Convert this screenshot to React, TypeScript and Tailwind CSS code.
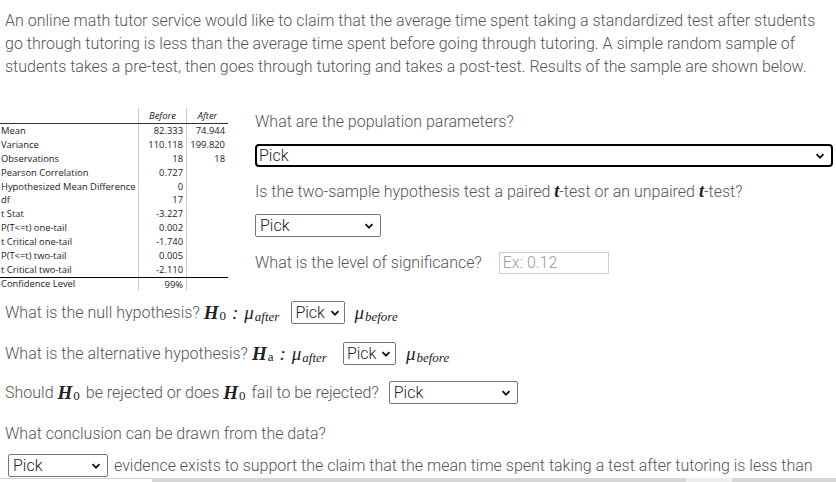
import React from "react";

const rows: [string, string, string][] = [
  ["Mean", "82.333", "74.944"],
  ["Variance", "110.118", "199.820"],
  ["Observations", "18", "18"],
  ["Pearson Correlation", "0.727", ""],
  ["Hypothesized Mean Difference", "0", ""],
  ["df", "17", ""],
  ["t Stat", "-3.227", ""],
  ["P(T<=t) one-tail", "0.002", ""],
  ["t Critical one-tail", "-1.740", ""],
  ["P(T<=t) two-tail", "0.005", ""],
  ["t Critical two-tail", "-2.110", ""],
];

const math = "font-['Liberation_Serif',serif] italic text-[#222]";

function Sel({ className = "" }: { className?: string }) {
  return (
    <div
      className={`flex items-center justify-between border border-[#767676] rounded-[2px] bg-white pl-[4px] pr-[6px] h-[23px] text-[#222] ${className}`}
    >
      <span>Pick</span>
      <svg width="10" height="10" viewBox="0 0 10 10">
        <path d="M1.5 3.2 5 6.7 8.5 3.2" fill="none" stroke="#111" strokeWidth="1.8" />
      </svg>
    </div>
  );
}

function Mu({ sub }: { sub: string }) {
  return (
    <span className={`${math} text-[19px]`}>
      μ<sub className="text-[13px] relative top-[2px] ml-[1px]">{sub}</sub>
    </span>
  );
}

function H({ sub }: { sub: string }) {
  return (
    <span className={`${math} font-bold text-[19px]`}>
      H<sub className="not-italic font-normal text-[13px] relative top-[1px] ml-[1px]">{sub}</sub>
    </span>
  );
}

export default function App() {
  return (
    <div className="w-[836px] h-[482px] overflow-hidden bg-white font-['Roboto',sans-serif] font-light text-[16px] leading-[23px] text-[#555] flex flex-col">
      <p className="px-[5px] pt-[9px]">
        An online math tutor service would like to claim that the average time spent taking a standardized test after students
        go through tutoring is less than the average time spent before going through tutoring. A simple random sample of
        students takes a pre-test, then goes through tutoring and takes a post-test. Results of the sample are shown below.
      </p>

      <div className="flex mt-[30px]">
        <div className="w-[228px] font-['Open_Sans',sans-serif] font-normal text-[9.4px] leading-[14px] text-[#222]">
          <div className="flex h-[15px] items-center">
            <div className="w-[138px]" />
            <div className="w-[48px] border-l border-[#ccc] h-full flex items-center justify-center italic">Before</div>
            <div className="w-[42px] border-l border-[#ccc] h-full flex items-center justify-center italic">After</div>
          </div>
          <div className="border-t border-[#333]">
            {rows.map(([a, b, c]) => (
              <div key={a} className="flex h-[13.9px] items-center">
                <div className="w-[138px] pl-[1px] whitespace-nowrap">{a}</div>
                <div className="w-[48px] border-l border-[#ccc] h-full text-right pr-[3px]">{b}</div>
                <div className="w-[42px] border-l border-[#ccc] h-full text-right pr-[3px]">{c}</div>
              </div>
            ))}
            <div className="flex h-[14px] items-center border-t-[1.5px] border-black">
              <div className="w-[138px] pl-[1px]">Confidence Level</div>
              <div className="w-[48px] border-l border-[#ccc] h-full text-right pr-[3px]">99%</div>
              <div className="w-[42px] border-l border-[#ccc] h-full" />
            </div>
          </div>
        </div>

        <div className="ml-[27px] flex-1 pr-[3px] pt-[2px]">
          <div>What are the population parameters?</div>
          <div className="mt-[11px] flex items-center justify-between border-2 border-black rounded-[4px] h-[23px] pl-[2px] pr-[6px] text-[#222]">
            <span>Pick</span>
            <svg width="10" height="10" viewBox="0 0 10 10">
              <path d="M1.5 3.2 5 6.7 8.5 3.2" fill="none" stroke="#111" strokeWidth="1.8" />
            </svg>
          </div>
          <div className="mt-[13px]">
            Is the two-sample hypothesis test a paired <span className={`${math} font-bold text-[18px]`}>t</span>-test or an
            unpaired <span className={`${math} font-bold text-[18px]`}>t</span>-test?
          </div>
          <Sel className="mt-[11px] w-[126px]" />
          <div className="mt-[14px] flex items-center">
            <span>What is the level of significance?</span>
            <div className="ml-[17px] w-[110px] h-[22px] border border-[#ccd] px-[3px] text-[#999] flex items-center">
              Ex: 0.12
            </div>
          </div>
        </div>
      </div>

      <div className="px-[5px] mt-[10px] flex items-center h-[24px]">
        <span>What is the null hypothesis?</span>
        <span className="ml-[4px]"><H sub="0" /></span>
        <span className={`${math} text-[19px] ml-[6px]`}>:</span>
        <span className="ml-[6px]"><Mu sub="after" /></span>
        <Sel className="ml-[12px] w-[54px] !pl-[3px] !pr-[4px]" />
        <span className="ml-[9px]"><Mu sub="before" /></span>
      </div>

      <div className="px-[5px] mt-[17px] flex items-center h-[24px]">
        <span>What is the alternative hypothesis?</span>
        <span className="ml-[4px]"><H sub="a" /></span>
        <span className={`${math} text-[19px] ml-[6px]`}>:</span>
        <span className="ml-[6px]"><Mu sub="after" /></span>
        <Sel className="ml-[16px] w-[53px] !pl-[3px] !pr-[4px]" />
        <span className="ml-[10px]"><Mu sub="before" /></span>
      </div>

      <div className="px-[5px] mt-[15px] flex items-center h-[24px]">
        <span>Should</span>
        <span className="ml-[4px]"><H sub="0" /></span>
        <span className="ml-[6px]">be rejected or does</span>
        <span className="ml-[4px]"><H sub="0" /></span>
        <span className="ml-[6px]">fail to be rejected?</span>
        <Sel className="ml-[10px] w-[129px]" />
      </div>

      <div className="px-[5px] mt-[17px]">What conclusion can be drawn from the data?</div>

      <div className="pl-[8px] mt-[9px] flex items-center h-[24px]">
        <Sel className="w-[100px]" />
        <span className="ml-[6px] whitespace-nowrap">
          evidence exists to support the claim that the mean time spent taking a test after tutoring is less than
        </span>
      </div>

      <div className="mt-auto flex h-[4px]">
        <div className="w-[152px] border-t border-[#ccc] bg-white" />
        <div className="w-[534px] bg-[#d6d6d6]" />
        <div className="w-[46px] bg-[#eeeeee]" />
        <div className="flex-1 bg-[#d6d6d6]" />
      </div>
    </div>
  );
}
